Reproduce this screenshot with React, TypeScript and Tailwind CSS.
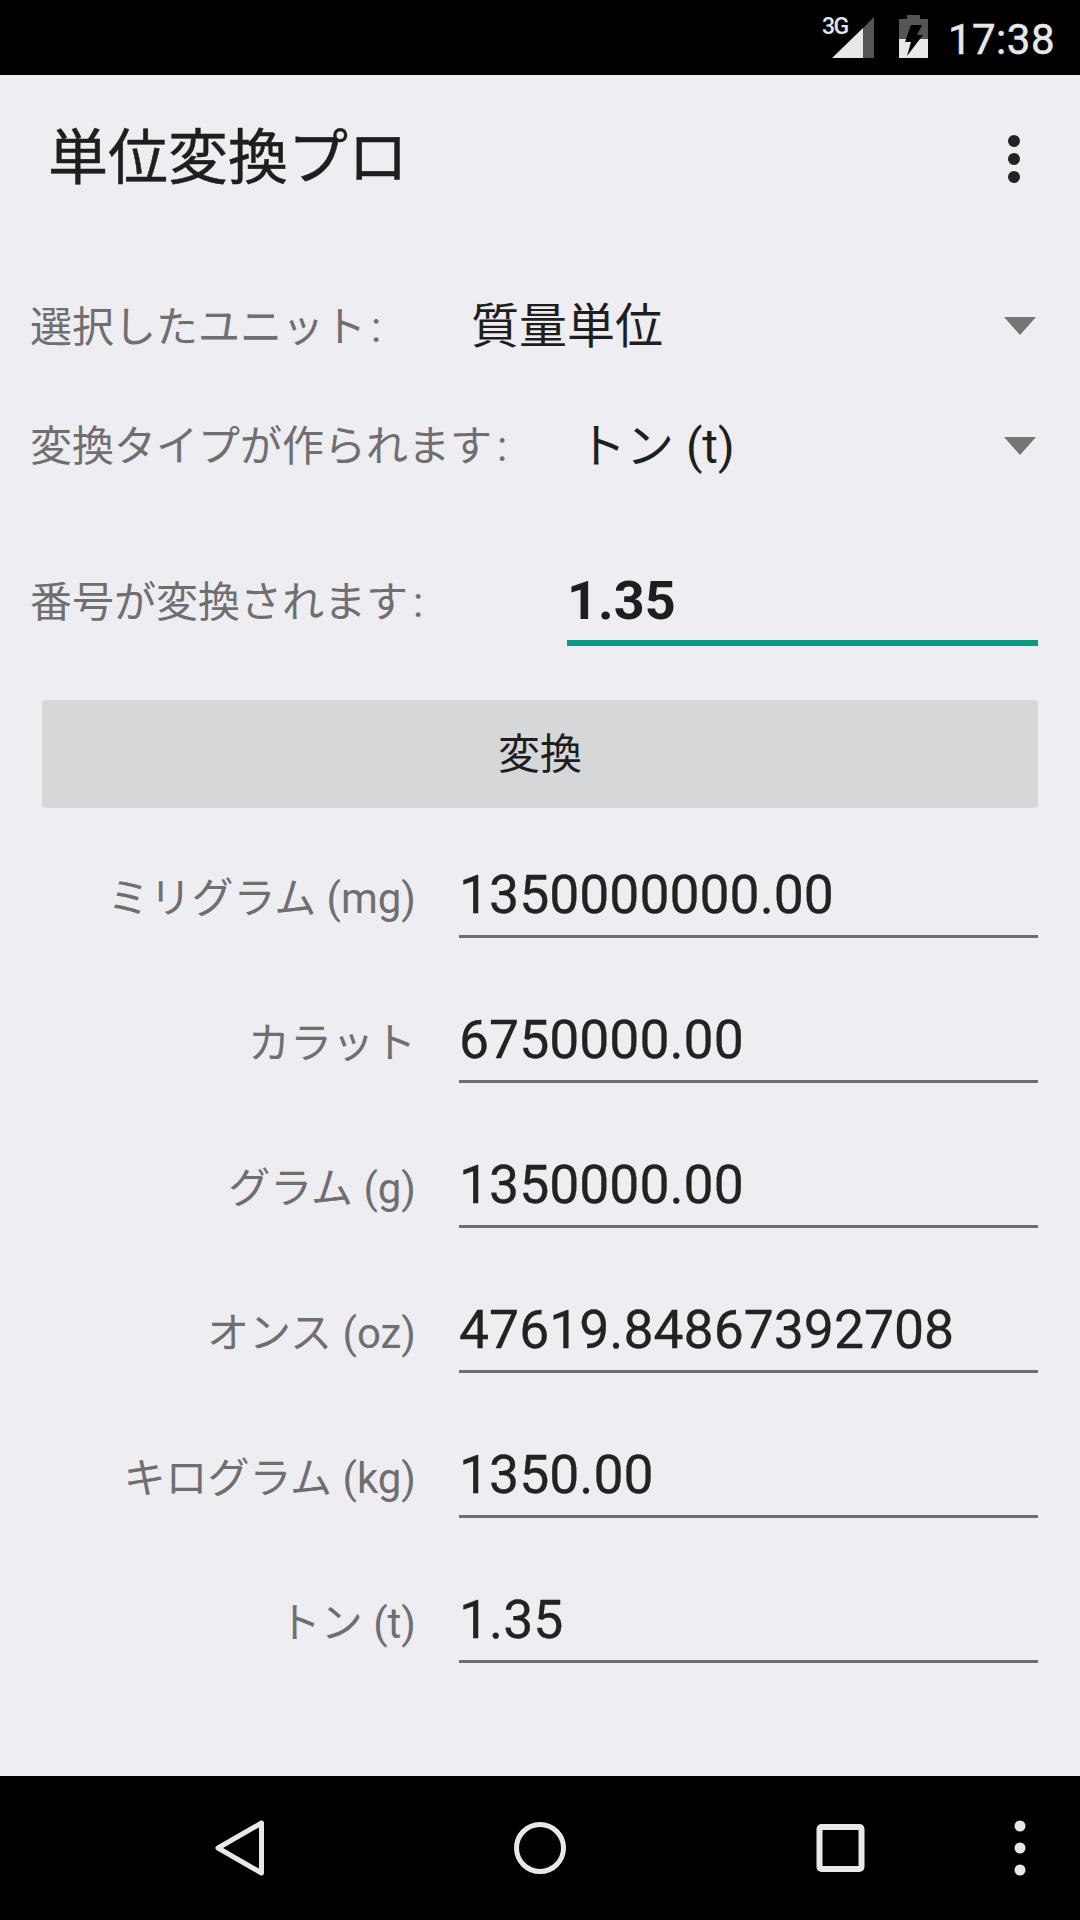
import React from 'react';

const jp = "font-['Roboto','Noto_Sans_CJK_JP',sans-serif]";

const results = [
  { label: 'ミリグラム (mg)', value: '1350000000.00' },
  { label: 'カラット', value: '6750000.00' },
  { label: 'グラム (g)', value: '1350000.00' },
  { label: 'オンス (oz)', value: '47619.84867392708' },
  { label: 'キログラム (kg)', value: '1350.00' },
  { label: 'トン (t)', value: '1.35' },
];

const StatusBar: React.FC = () => (
  <div className="h-[75px] bg-black flex items-center justify-end pr-[25px] shrink-0">
    <div className="relative w-[42px] h-[41px] mr-[25px]">
      <span className="absolute left-[-10px] top-[-2px] text-[23px] tracking-[-1.5px] font-medium leading-[24px] text-[#e4e4e6] font-['Roboto',sans-serif]">3G</span>
      <svg width="42" height="41" viewBox="0 0 42 41" className="block">
        <path d="M0 41 L31 11 V41 Z" fill="#e8e8ea" />
        <path d="M31 11 L42 0 V41 H31 Z" fill="#555" />
      </svg>
    </div>
    <svg width="29" height="43" viewBox="0 0 29 43" className="mr-[20px] mt-[-2px]">
      <path d="M8 0 H21 V4 H29 V24 H0 V4 H8 Z" fill="#555" />
      <path d="M0 24 H29 V43 H0 Z" fill="#e8e8ea" />
      <path d="M12 10 H23 L18 20 H24 L8 41 L12 27 H6 Z" fill="#000" />
    </svg>
    <span className="text-[42px] leading-none text-[#e8e8ea] font-['Roboto',sans-serif] tracking-[0.5px] mt-[5px] [-webkit-text-stroke:0.5px_#e8e8ea]">17:38</span>
  </div>
);

const Caret: React.FC = () => (
  <svg width="32" height="18" viewBox="0 0 32 18" className="shrink-0">
    <path d="M0 0 H32 L16 18 Z" fill="#757575" />
  </svg>
);

const NavBar: React.FC = () => (
  <div className="h-[144px] bg-black shrink-0">
    <svg width="1080" height="144" viewBox="0 0 1080 144" fill="none" stroke="#e8e8ea" strokeWidth="5" className="block">
      <path d="M261.5 47 L218 72 L261.5 97 Z" strokeLinejoin="round" />
      <circle cx="540" cy="72" r="23.5" />
      <rect x="819.5" y="51" width="42" height="42" rx="2" strokeWidth="6" />
      <g fill="#e8e8ea" stroke="none">
        <circle cx="1020" cy="50" r="5.5" />
        <circle cx="1020" cy="72" r="5.5" />
        <circle cx="1020" cy="94" r="5.5" />
      </g>
    </svg>
  </div>
);

const App: React.FC = () => {
  return (
    <div className={`w-[1080px] h-[1920px] flex flex-col bg-[#eeedf1] overflow-hidden ${jp}`}>
      <StatusBar />

      <div className="flex-1 flex flex-col">
        <div className="h-[168px] flex items-center justify-between pl-[48px] pr-[60px] shrink-0">
          <h1 className="text-[60px] leading-none font-normal text-[#1e1e1e] [-webkit-text-stroke:0.5px_#1e1e1e]">単位変換プロ</h1>
          <div className="flex flex-col gap-[6px]">
            <span className="w-[12px] h-[12px] rounded-full bg-[#222222]" />
            <span className="w-[12px] h-[12px] rounded-full bg-[#222222]" />
            <span className="w-[12px] h-[12px] rounded-full bg-[#222222]" />
          </div>
        </div>

        <div className="flex items-center h-[120px] mt-[23px] pl-[30px] pr-[44px]">
          <span className="text-[42px] leading-none text-[#706e70] w-[441px] mt-[4px]">選択したユニット<span className="ml-[5px]">:</span></span>
          <span className="text-[48px] leading-none text-[#1e1e1e] flex-1 mt-[2px]">質量単位</span>
          <Caret />
        </div>
        <div className="flex items-center h-[120px] pl-[30px] pr-[44px]">
          <span className="text-[42px] leading-none text-[#706e70] w-[548px] mt-[2px]">変換タイプが作られます<span className="ml-[5px]">:</span></span>
          <span className="text-[48px] leading-none text-[#1e1e1e] flex-1 mt-[2px]">トン (t)</span>
          <Caret />
        </div>

        <div className="flex items-start mt-[33px] pl-[30px] pr-[42px] h-[108px]">
          <span className="text-[42px] leading-none text-[#706e70] w-[537px] mt-[43px]">番号が変換されます<span className="ml-[5px]">:</span></span>
          <div className="flex-1 h-[107px] border-b-[6px] border-[#0b9b84] text-[54px] font-bold leading-none text-[#1e1e1e] pt-[35px]">1.35</div>
        </div>

        <div className="mt-[53px] ml-[42px] mr-[42px] h-[108px] rounded-[4px] bg-[#d5d7d9] flex items-center justify-center text-[42px] text-[#1e1e1e] shrink-0">変換</div>

        <div className="flex flex-col gap-[45px] mt-[30px] pr-[42px]">
          {results.map((r) => (
            <div key={r.label} className="flex h-[100px] items-end">
              <span className="w-[416px] text-right text-[42px] leading-none text-[#706e70] pb-[18px] shrink-0">{r.label}</span>
              <div className="flex-1 ml-[43px] h-[95px] border-b-[3px] border-[#6f6d70] text-[53.5px] leading-none text-[#222222] pt-[25px] [-webkit-text-stroke:0.3px_#222222]">{r.value}</div>
            </div>
          ))}
        </div>
      </div>

      <NavBar />
    </div>
  );
};

export default App;
